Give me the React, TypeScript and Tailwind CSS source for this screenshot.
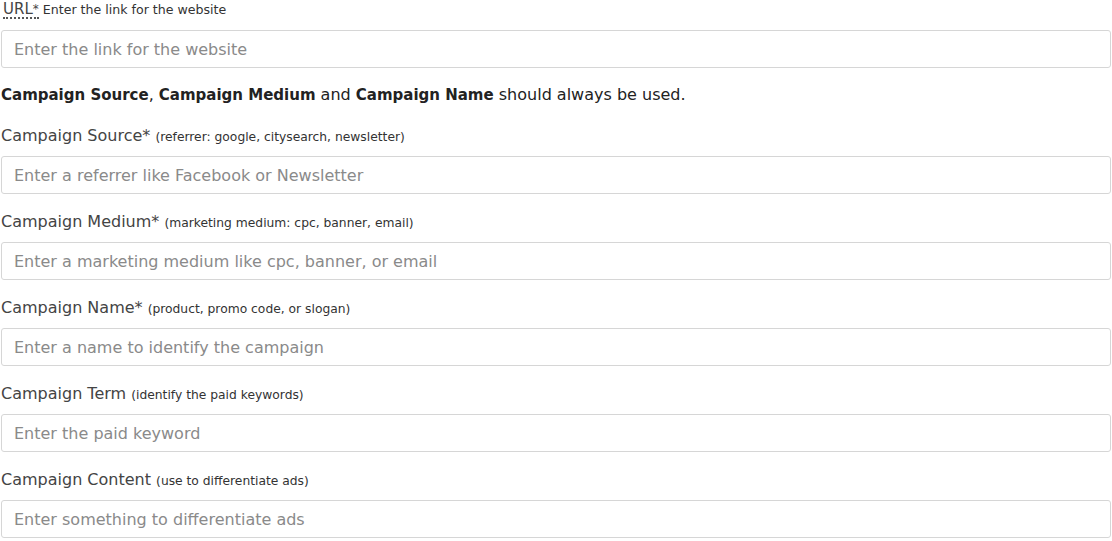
import React from 'react';

interface Field {
  id: string;
  label: string;
  required?: boolean;
  hint: string;
  placeholder: string;
}

const fields: Field[] = [
  {
    id: 'source',
    label: 'Campaign Source',
    required: true,
    hint: '(referrer: google, citysearch, newsletter)',
    placeholder: 'Enter a referrer like Facebook or Newsletter',
  },
  {
    id: 'medium',
    label: 'Campaign Medium',
    required: true,
    hint: '(marketing medium: cpc, banner, email)',
    placeholder: 'Enter a marketing medium like cpc, banner, or email',
  },
  {
    id: 'name',
    label: 'Campaign Name',
    required: true,
    hint: '(product, promo code, or slogan)',
    placeholder: 'Enter a name to identify the campaign',
  },
  {
    id: 'term',
    label: 'Campaign Term',
    hint: '(identify the paid keywords)',
    placeholder: 'Enter the paid keyword',
  },
  {
    id: 'content',
    label: 'Campaign Content',
    hint: '(use to differentiate ads)',
    placeholder: 'Enter something to differentiate ads',
  },
];

const inputClass =
  'block w-full h-[38px] rounded-[3px] border border-[#d6d6d6] bg-white px-3 text-[16px] text-[#333] placeholder:text-[#8a8a8a] outline-none';

export default function App() {
  return (
    <div className="bg-white min-h-screen px-[1px] text-[#333] font-['DejaVu_Sans',sans-serif]">
      {/* URL */}
      <div>
        <label className="flex items-baseline h-[20px] leading-[20px]">
          <abbr title="required" className="ml-[2px] text-[15px] text-[#444] no-underline border-b-2 border-dotted border-[#555] leading-[16px]">
            URL<span className="text-[12px] align-top">*</span>
          </abbr>
          <span className="ml-[4px] text-[12.6px] text-[#333]">Enter the link for the website</span>
        </label>
        <input className={`${inputClass} mt-[10px]`} placeholder="Enter the link for the website" />
      </div>

      <p className="mt-[17px] mb-[21px] h-[20px] leading-[20px] text-[16px] text-[#222]">
        <b className="font-bold text-[15px]">Campaign Source</b>, <b className="font-bold text-[15px]">Campaign Medium</b> and{' '}
        <b className="font-bold text-[15px]">Campaign Name</b> should always be used.
      </p>

      {fields.map((f, i) => (
        <div key={f.id} className={i > 0 ? 'mt-[18px]' : ''}>
          <label className="block h-[20px] leading-[20px] text-[16px] text-[#444]">
            {f.label}
            {f.required && '*'} <span className="text-[12.3px] text-[#333]">{f.hint}</span>
          </label>
          <input className={`${inputClass} mt-[10px]`} placeholder={f.placeholder} />
        </div>
      ))}
    </div>
  );
}
